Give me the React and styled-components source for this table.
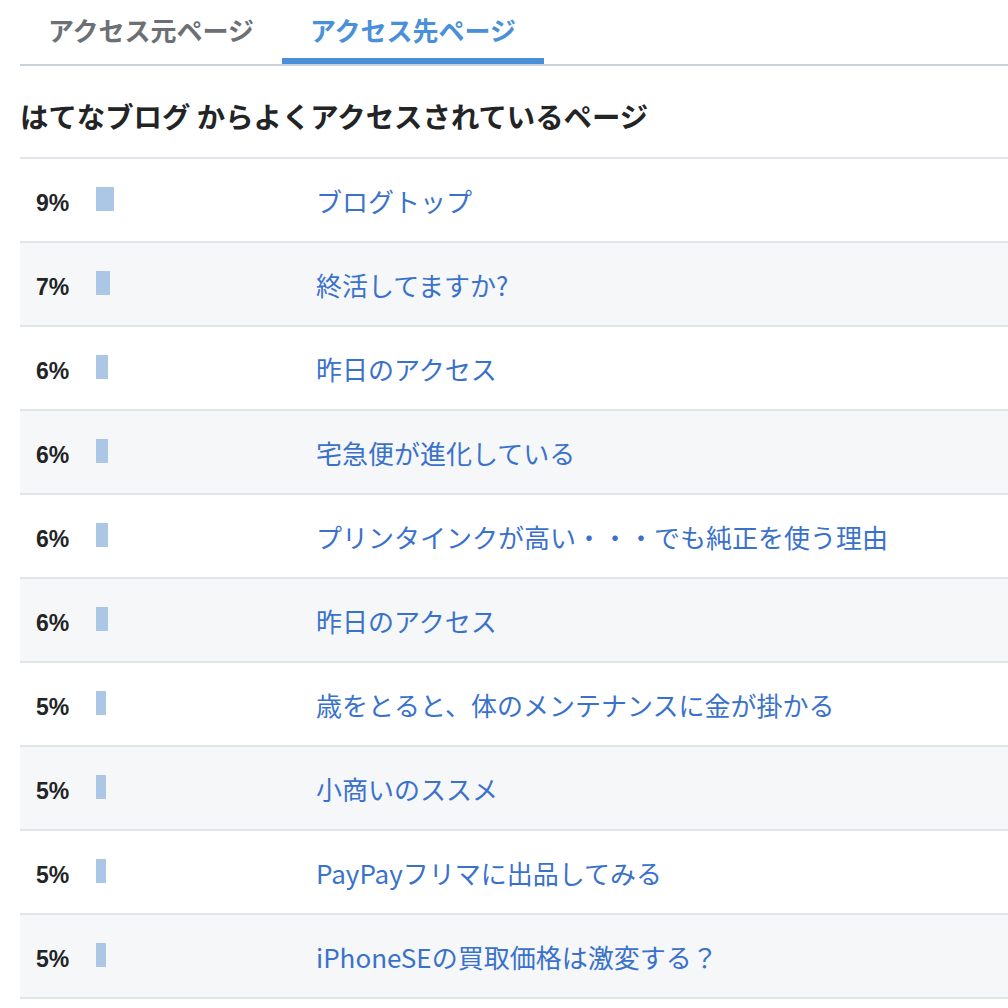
import React from "react";
import styled, { createGlobalStyle } from "styled-components";

const GlobalStyle = createGlobalStyle`
  html, body { margin: 0; padding: 0; background: #ffffff; }
  body { font-family: "Noto Sans CJK JP", "Noto Sans", sans-serif; }
`;

const Page = styled.div`
  padding-left: 20px;
  overflow: hidden;
`;

const TabBar = styled.div`
  display: flex;
  border-bottom: 2px solid #c9d2dc;
  height: 66px;
  box-sizing: border-box;
`;

const Tab = styled.div`
  width: 262px;
  box-sizing: border-box;
  display: flex;
  justify-content: center;
  align-items: flex-start;
  padding-top: 12px;
  font-size: 26px;
  font-weight: 700;
  color: ${(p) => (p.$active ? "#4a90d9" : "#6c7075")};
  border-bottom: 6px solid ${(p) => (p.$active ? "#4a90d9" : "transparent")};
  line-height: 36px;
`;

const Heading = styled.h2`
  margin: 0;
  height: 93px;
  display: flex;
  align-items: center;
  font-size: 28.4px;
  font-weight: 700;
  color: #222426;
  border-bottom: 2px solid #e1e5ea;
  box-sizing: border-box;
  padding-top: 7px;
`;

const Row = styled.div`
  display: grid;
  grid-template-columns: 60px 220px 1fr;
  align-items: center;
  height: 84px;
  box-sizing: border-box;
  padding-left: 16px;
  border-bottom: 2px solid #e1e5ea;
  background: ${(p) => (p.$alt ? "#f6f7f9" : "#ffffff")};
`;

const Percent = styled.span`
  font-family: "Liberation Sans", Arial, sans-serif;
  font-size: 23px;
  font-weight: 700;
  color: #222426;
  padding-top: 6px;
`;

const BarCell = styled.div`
  display: flex;
  align-items: center;
  padding-bottom: 2px;
`;

const Bar = styled.div`
  height: 24px;
  background: #abc7e5;
`;

const Title = styled.a`
  font-size: 26px;
  color: #3a72cb;
  text-decoration: none;
  white-space: nowrap;
  padding-bottom: 0;
`;

const rows = [
  [9, "ブログトップ"],
  [7, "終活してますか?"],
  [6, "昨日のアクセス"],
  [6, "宅急便が進化している"],
  [6, "プリンタインクが高い・・・でも純正を使う理由"],
  [6, "昨日のアクセス"],
  [5, "歳をとると、体のメンテナンスに金が掛かる"],
  [5, "小商いのススメ"],
  [5, "PayPayフリマに出品してみる"],
  [5, "iPhoneSEの買取価格は激変する？"],
];

export default function App() {
  return (
    <>
      <GlobalStyle />
      <Page>
        <TabBar>
          <Tab>アクセス元ページ</Tab>
          <Tab $active>アクセス先ページ</Tab>
        </TabBar>
        <Heading>はてなブログ からよくアクセスされているページ</Heading>
        {rows.map(([pct, title], i) => (
          <Row key={i} $alt={i % 2 === 1}>
            <Percent>{pct}%</Percent>
            <BarCell>
              <Bar style={{ width: `${pct * 2}px` }} />
            </BarCell>
            <Title href="#">{title}</Title>
          </Row>
        ))}
      </Page>
    </>
  );
}
